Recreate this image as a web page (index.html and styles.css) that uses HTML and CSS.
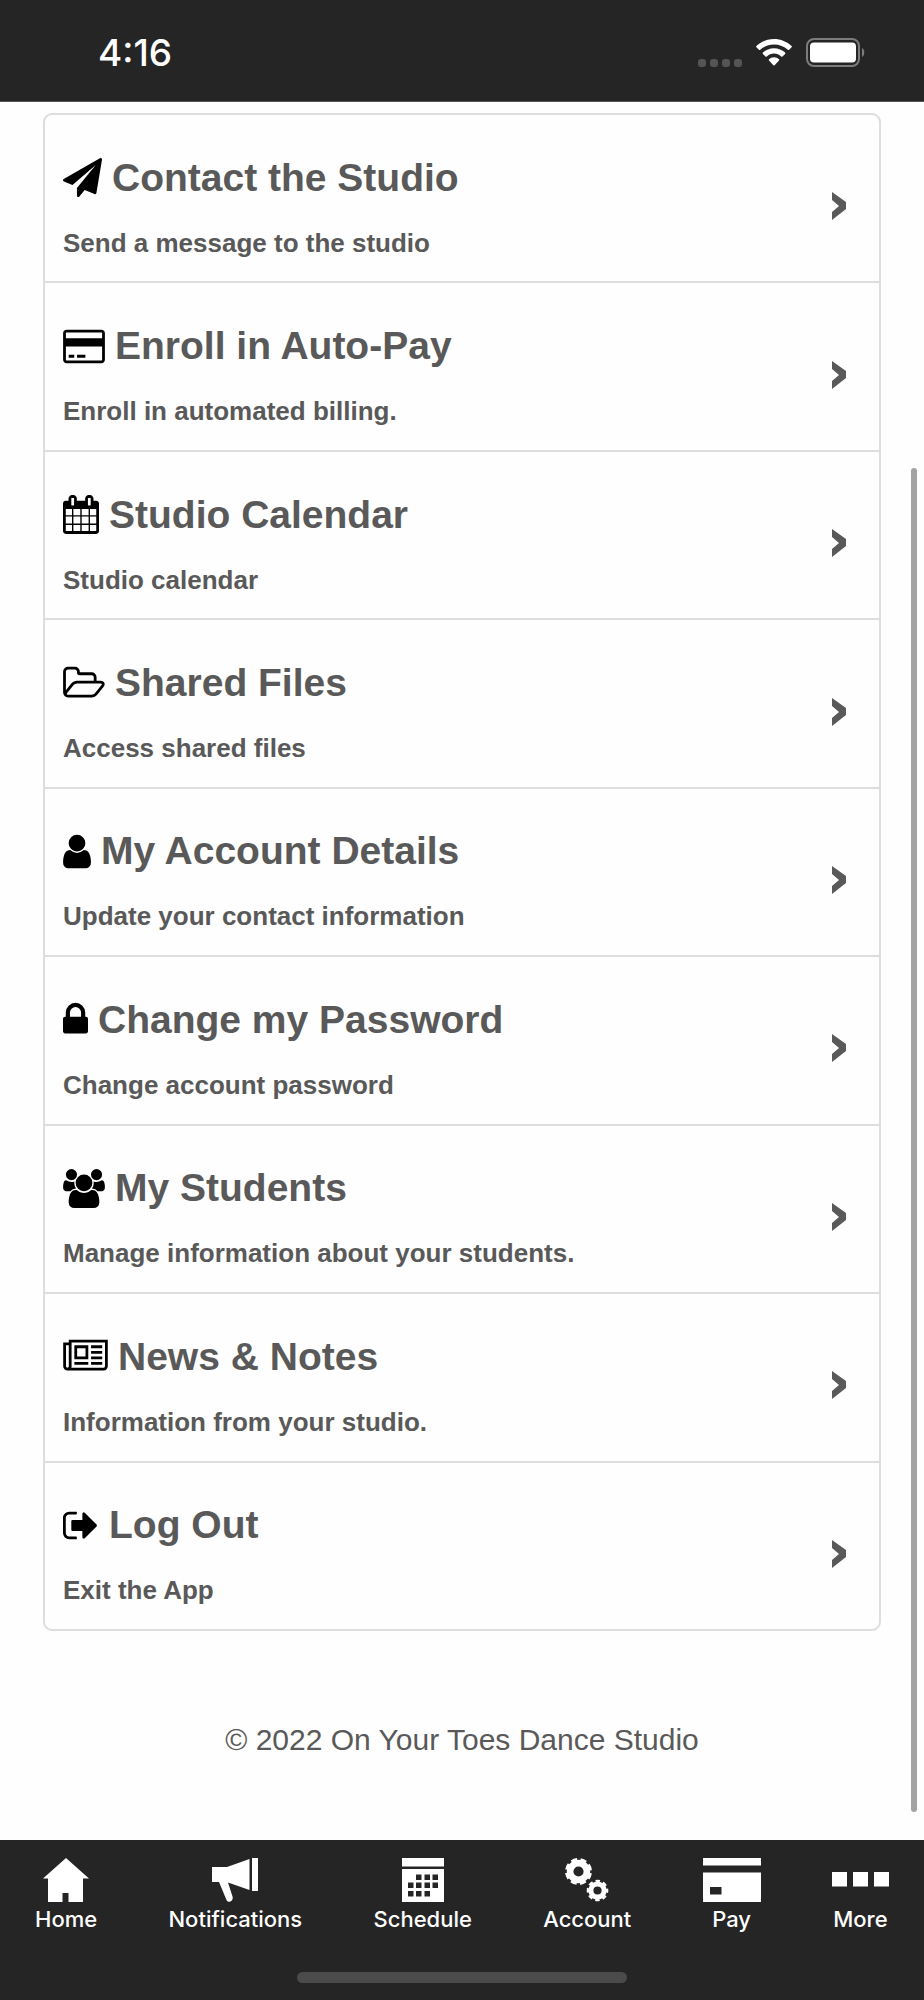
FILE: index.html
```
<!DOCTYPE html>
<html lang="en">
<head>
  <meta charset="UTF-8" />
  <meta name="viewport" content="width=device-width, initial-scale=1.0"/>
  <title>On Your Toes Dance Studio</title>
  <link rel="stylesheet" href="styles.css">
</head>
<body>
  <header class="status-bar">
    <span class="time">4:16</span>
    <div class="status-icons">
      <span class="signal"><i></i><i></i><i></i><i></i></span>
      <svg class="wifi" viewBox="0 0 36 27" width="36" height="27" aria-hidden="true">
        <path fill="#fff" d="M18 0c6.800 0 13 2.700 17.600 7 .4.400.4.900 0 1.300l-2.500 2.500c-.4.400-.9.400-1.300 0C28.200 7.400 23.300 5.400 18 5.400S7.800 7.400 4.200 10.800c-.4.400-.9.400-1.300 0L.4 8.300C0 7.900 0 7.400.4 7 5 2.700 11.200 0 18 0z"/>
        <path fill="#fff" d="M18 9.200c4.300 0 8.200 1.700 11.100 4.400.4.400.4.900 0 1.300l-2.600 2.600c-.4.400-.9.400-1.300 0-1.900-1.800-4.400-2.900-7.200-2.900s-5.300 1.100-7.200 2.900c-.4.400-.9.400-1.300 0l-2.600-2.600c-.4-.4-.4-.9 0-1.300C9.800 10.900 13.700 9.200 18 9.200z"/>
        <path fill="#fff" d="M18 18.200c2 0 3.700.8 5 2 .4.400.4.800 0 1.200l-4.400 4.900c-.4.400-.8.400-1.200 0L13 21.400c-.4-.4-.4-.8 0-1.200 1.300-1.200 3-2 5-2z"/>
      </svg>
      <svg class="battery" viewBox="0 0 59 29" width="59" height="29" aria-hidden="true">
        <rect x="1" y="1" width="52" height="27" rx="7" fill="none" stroke="#7c7c7c" stroke-width="2"/>
        <rect x="4" y="4.500" width="46" height="20" rx="4" fill="#fff"/>
        <path d="M56 10c3 1 3 8 0 9z" fill="#7c7c7c"/>
      </svg>
    </div>
  </header>

  <main class="content">
    <ul class="menu">
      <li>
        <a href="#">
          <div class="item">
            <h2><svg width="39" height="39" viewBox="0 0 1792 1792"><path d="M1764 11q33 24 27 64l-256 1536q-5 29-32 45-14 8-31 8-11 0-24-5l-453-185-242 295q-18 23-49 23-13 0-22-4-19-7-30.500-23.500t-11.500-36.500v-349l864-1059-1069 925-395-162q-37-14-40-55-2-40 32-59l1664-960q15-9 32-9 20 0 36 11z"/></svg>Contact the Studio</h2>
            <p>Send a message to the studio</p>
          </div>
          <svg class="chevron" viewBox="0 0 14 28" width="14" height="28"><path d="M0 0l14 10v7L0 28v-8l7-6-7-6z"/></svg>
        </a>
      </li>
      <li>
        <a href="#">
          <div class="item">
            <h2><svg width="42" height="39" viewBox="0 0 1920 1792"><path d="M1760 128q66 0 113 47t47 113v1216q0 66-47 113t-113 47h-1600q-66 0-113-47t-47-113v-1216q0-66 47-113t113-47h1600zm-1600 128q-13 0-22.500 9.500t-9.500 22.500v224h1664v-224q0-13-9.500-22.500t-22.500-9.500h-1600zm1600 1280q13 0 22.500-9.500t9.500-22.500v-608h-1664v608q0 13 9.500 22.500t22.500 9.500h1600zm-1504-128v-128h256v128h-256zm384 0v-128h384v128h-384z"/></svg>Enroll in Auto-Pay</h2>
            <p>Enroll in automated billing.</p>
          </div>
          <svg class="chevron" viewBox="0 0 14 28" width="14" height="28"><path d="M0 0l14 10v7L0 28v-8l7-6-7-6z"/></svg>
        </a>
      </li>
      <li>
        <a href="#">
          <div class="item">
            <h2><svg width="36" height="39" viewBox="0 0 1664 1792"><path d="M128 1664h288v-288h-288v288zm352 0h320v-288h-320v288zm-352-352h288v-320h-288v320zm352 0h320v-320h-320v320zm-352-384h288v-288h-288v288zm736 736h320v-288h-320v288zm-384-736h320v-288h-320v288zm768 736h288v-288h-288v288zm-384-352h320v-320h-320v320zm-352-864v-288q0-13-9.500-22.500t-22.500-9.500h-64q-13 0-22.500 9.500t-9.500 22.500v288q0 13 9.500 22.500t22.500 9.500h64q13 0 22.500-9.500t9.500-22.500zm736 864h288v-320h-288v320zm-384-384h320v-288h-320v288zm384 0h288v-288h-288v288zm32-480v-288q0-13-9.500-22.500t-22.500-9.500h-64q-13 0-22.500 9.500t-9.500 22.500v288q0 13 9.500 22.500t22.500 9.500h64q13 0 22.500-9.500t9.500-22.500zm384-64v1280q0 52-38 90t-90 38h-1408q-52 0-90-38t-38-90v-1280q0-52 38-90t90-38h128v-96q0-66 47-113t113-47h64q66 0 113 47t47 113v96h384v-96q0-66 47-113t113-47h64q66 0 113 47t47 113v96h128q52 0 90 38t38 90z"/></svg>Studio Calendar</h2>
            <p>Studio calendar</p>
          </div>
          <svg class="chevron" viewBox="0 0 14 28" width="14" height="28"><path d="M0 0l14 10v7L0 28v-8l7-6-7-6z"/></svg>
        </a>
      </li>
      <li>
        <a href="#">
          <div class="item">
            <h2><svg width="42" height="39" viewBox="0 -128 1920 1792"><path d="M1781 803q0-35-53-35h-1088q-40 0-85.500 21.500t-71.500 52.500l-294 363q-18 24-18 40 0 35 53 35h1088q40 0 86-22t71-53l294-363q18-22 18-39zm-1141-163h768v-160q0-40-28-68t-68-28h-576q-40 0-68-28t-28-68v-64q0-40-28-68t-68-28h-320q-40 0-68 28t-28 68v853l256-315q44-53 116-87.500t140-34.500zm1269 163q0 62-46 120l-295 363q-43 53-116 87.500t-140 34.500h-1088q-92 0-158-66t-66-158v-960q0-92 66-158t158-66h320q92 0 158 66t66 158v32h544q92 0 158 66t66 158v160h192q54 0 99 24.500t67 70.500q15 32 15 68z"/></svg>Shared Files</h2>
            <p>Access shared files</p>
          </div>
          <svg class="chevron" viewBox="0 0 14 28" width="14" height="28"><path d="M0 0l14 10v7L0 28v-8l7-6-7-6z"/></svg>
        </a>
      </li>
      <li>
        <a href="#">
          <div class="item">
            <h2><svg width="28" height="39" viewBox="0 0 1280 1792"><path d="M1280 1399q0 109-62.500 187t-150.500 78h-854q-88 0-150.500-78t-62.500-187q0-85 8.500-160.500t31.500-152 58.500-131 94-89 134.500-34.500q131 128 313 128t313-128q76 0 134.500 34.500t94 89 58.500 131 31.500 152 8.500 160.500zm-256-887q0 159-112.500 271.500t-271.500 112.500-271.500-112.500-112.500-271.500 112.500-271.500 271.500-112.500 271.500 112.500 112.500 271.500z"/></svg>My Account Details</h2>
            <p>Update your contact information</p>
          </div>
          <svg class="chevron" viewBox="0 0 14 28" width="14" height="28"><path d="M0 0l14 10v7L0 28v-8l7-6-7-6z"/></svg>
        </a>
      </li>
      <li>
        <a href="#">
          <div class="item">
            <h2><svg width="25" height="39" viewBox="0 0 1152 1792"><path d="M320 768h512v-192q0-106-75-181t-181-75-181 75-75 181v192zm832 96v576q0 40-28 68t-68 28h-960q-40 0-68-28t-28-68v-576q0-40 28-68t68-28h32v-192q0-184 132-316t316-132 316 132 132 316v192h32q40 0 68 28t28 68z"/></svg>Change my Password</h2>
            <p>Change account password</p>
          </div>
          <svg class="chevron" viewBox="0 0 14 28" width="14" height="28"><path d="M0 0l14 10v7L0 28v-8l7-6-7-6z"/></svg>
        </a>
      </li>
      <li>
        <a href="#">
          <div class="item">
            <h2><svg width="42" height="39" viewBox="0 0 1920 1792"><path d="M593 896q-162 5-265 128h-134q-82 0-138-40.500t-56-118.500q0-353 124-353 6 0 43.500 21t97.500 42.500 119 21.500q67 0 133-23-5 37-5 66 0 139 81 256zm1071 637q0 120-73 189.500t-194 69.500h-874q-121 0-194-69.500t-73-189.500q0-53 3.500-103.500t14-109 26.500-108.500 43-97.500 62-81 85.500-53.500 111.500-20q10 0 43 21.500t73 48 107 48 135 21.500 135-21.500 107-48 73-48 43-21.500q61 0 111.500 20t85.500 53.500 62 81 43 97.500 26.500 108.500 14 109 3.500 103.500zm-1024-1277q0 106-75 181t-181 75-181-75-75-181 75-181 181-75 181 75 75 181zm704 384q0 159-112.500 271.500t-271.500 112.500-271.500-112.500-112.500-271.500 112.500-271.500 271.500-112.500 271.500 112.500 112.500 271.500zm576 225q0 78-56 118.500t-138 40.500h-134q-103-123-265-128 81-117 81-256 0-29-5-66 66 23 133 23 59 0 119-21.500t97.500-42.500 43.500-21q124 0 124 353zm-128-609q0 106-75 181t-181 75-181-75-75-181 75-181 181-75 181 75 75 181z"/></svg>My Students</h2>
            <p>Manage information about your students.</p>
          </div>
          <svg class="chevron" viewBox="0 0 14 28" width="14" height="28"><path d="M0 0l14 10v7L0 28v-8l7-6-7-6z"/></svg>
        </a>
      </li>
      <li>
        <a href="#">
          <div class="item">
            <h2><svg width="45" height="39" viewBox="0 0 2048 1792"><path d="M1024 512h-384v384h384v-384zm128 640v128h-640v-128h640zm0-768v640h-640v-640h640zm640 768v128h-512v-128h512zm0-256v128h-512v-128h512zm0-256v128h-512v-128h512zm0-256v128h-512v-128h512zm-1536 960v-960h-128v960q0 26 19 45t45 19 45-19 19-45zm1664 0v-1088h-1536v1088q0 33-11 64h1483q26 0 45-19t19-45zm128-1216v1216q0 80-56 136t-136 56h-1664q-80 0-136-56t-56-136v-1088h256v-128h1792z"/></svg>News &amp; Notes</h2>
            <p>Information from your studio.</p>
          </div>
          <svg class="chevron" viewBox="0 0 14 28" width="14" height="28"><path d="M0 0l14 10v7L0 28v-8l7-6-7-6z"/></svg>
        </a>
      </li>
      <li>
        <a href="#">
          <div class="item">
            <h2><svg width="36" height="39" viewBox="0 0 1664 1792"><path d="M640 1440q0 4 1 20t.500 26.500-3 23.500-10 19.500-20.500 6.500h-320q-119 0-203.500-84.500t-84.500-203.500v-704q0-119 84.500-203.500t203.500-84.500h320q13 0 22.500 9.500t9.500 22.500q0 4 1 20t.500 26.500-3 23.500-10 19.500-20.500 6.500h-320q-66 0-113 47t-47 113v704q0 66 47 113t113 47h312l11.500 1 11.500 3 8 5.500 7 9 2 13.500zm928-544q0 26-19 45l-544 544q-19 19-45 19t-45-19-19-45v-288h-448q-26 0-45-19t-19-45v-384q0-26 19-45t45-19h448v-288q0-26 19-45t45-19 45 19l544 544q19 19 19 45z"/></svg>Log Out</h2>
            <p>Exit the App</p>
          </div>
          <svg class="chevron" viewBox="0 0 14 28" width="14" height="28"><path d="M0 0l14 10v7L0 28v-8l7-6-7-6z"/></svg>
        </a>
      </li>
    </ul>
    <footer class="copyright">© 2022 On Your Toes Dance Studio</footer>
    <div class="scrollbar"></div>
  </main>

  <nav class="tab-bar">
    <div class="tabs">
      <a href="#">
        <svg width="46" height="44" viewBox="0 0 46 44"><path d="M23 0l23 20.500h-6V44H25.500v-9h-6v9H5V20.500H0z"/></svg>
        Home
      </a>
      <a href="#">
        <svg width="46" height="44" viewBox="0 0 46 44"><path d="M0 9h15L37.500 1v31L16 24.500l4.500 14c1.500 5-4.500 7-6 3.500L7 24H0zM40 0h6v33h-6z"/></svg>
        Notifications
      </a>
      <a href="#">
        <svg width="42" height="44" viewBox="0 0 42 44"><path fill-rule="evenodd" d="M0 0h42v8.500H0zM0 11h42v33H0zM14 16.500v5.500h5.500v-5.500zM22.500 16.500v5.500H28v-5.500zM30.500 16.500v5.500H36v-5.500zM6 24.500V30h5.500v-5.500zM14 24.500V30h5.500v-5.500zM22.500 24.500V30H28v-5.500zM30.500 24.500V30H36v-5.500zM6 33v5.500h5.500V33zM14 33v5.500h5.500V33zM22.500 33v5.500H28V33z"/></svg>
        Schedule
      </a>
      <a href="#">
        <svg width="44" height="44" viewBox="0 0 44 44">
          <g fill="none" stroke="#fff">
            <circle cx="13.500" cy="13.500" r="8.400" stroke-width="6.600"/>
            <circle cx="13.500" cy="13.500" r="12" stroke-width="3" stroke-dasharray="6 3.420" stroke-dashoffset="-1.710"/>
            <circle cx="32.500" cy="32.500" r="6.600" stroke-width="5"/>
            <circle cx="32.500" cy="32.500" r="9.500" stroke-width="2.600" stroke-dasharray="4.400 3.060" stroke-dashoffset="2.200"/>
          </g>
        </svg>
        Account
      </a>
      <a href="#">
        <svg width="58" height="44" viewBox="0 0 58 44"><path fill-rule="evenodd" d="M0 0h58v7.500H0zM0 14.500h58V44H0zM7 29v7.500h11.500V29z"/></svg>
        Pay
      </a>
      <a href="#">
        <svg width="57" height="44" viewBox="0 0 57 44"><path d="M0 14h15v14.500H0zM21 14h15v14.500H21zM42 14h15v14.500H42z"/></svg>
        More
      </a>
    </div>
    <div class="home-indicator"></div>
  </nav>
</body>
</html>
```

FILE: styles.css
```
* {
  box-sizing: border-box;
}

body {
  font-family: "Liberation Sans", Arial, sans-serif;
  background-color: #fefefe;
  color: #595959;
  margin: 0;
  min-height: 100vh;
  display: flex;
  flex-direction: column;
}

a {
  color: inherit;
  text-decoration: none;
}

.status-bar {
  background-color: #252525;
  height: 102px;
  padding: 4px 59px 0 98px;
  border-bottom: 1px solid #555;
  display: flex;
  justify-content: space-between;
  align-items: center;
}

.time {
  font-family: Inter, sans-serif;
  font-size: 37px;
  font-weight: 500;
  color: #fff;
}

.status-icons {
  display: flex;
  align-items: center;
  gap: 14px;
}

.signal {
  display: flex;
  align-self: flex-end;
  gap: 4px;
}

.signal i {
  width: 8px;
  height: 8px;
  border-radius: 3px;
  background-color: #555;
}

.content {
  position: relative;
  flex: 1;
  display: flex;
  flex-direction: column;
  padding: 11px 43px 0;
}

.menu {
  flex: 1;
  list-style: none;
  margin: 0;
  padding: 0;
  border: 2px solid #ddd;
  border-radius: 9px;
  display: flex;
  flex-direction: column;
}

.menu li {
  flex: 1;
  display: flex;
  border-top: 2px solid #ddd;
}

.menu li:first-child {
  border-top: none;
}

.menu a {
  flex: 1;
  padding: 0 33px 0 18px;
  display: flex;
  justify-content: space-between;
  align-items: center;
}

.item h2 {
  margin: 16px 0 25px;
  font-size: 39px;
  line-height: 48px;
  display: flex;
  align-items: center;
  gap: 10px;
}

.item h2 svg {
  fill: #000;
}

.item p {
  margin: 0;
  font-size: 26px;
  font-weight: bold;
  line-height: 32px;
}

.chevron {
  margin-top: 16px;
  fill: #595959;
}

.copyright {
  padding: 89px 0 80px;
  font-size: 30px;
  line-height: 40px;
  text-align: center;
}

.scrollbar {
  position: absolute;
  right: 7px;
  top: 366px;
  bottom: 28px;
  width: 6px;
  border-radius: 3px;
  background-color: #a3a3a3;
}

.tab-bar {
  background-color: #252525;
  height: 160px;
  padding: 18px 35px 17px;
  display: flex;
  flex-direction: column;
  justify-content: space-between;
  align-items: center;
}

.tabs {
  width: 100%;
  display: flex;
  justify-content: space-between;
}

.tabs a {
  display: flex;
  flex-direction: column;
  align-items: center;
  gap: 4px;
  font-family: Inter, sans-serif;
  font-size: 22px;
  font-weight: 500;
  line-height: 26px;
  color: #fff;
}

.tabs svg {
  fill: #fff;
}

.home-indicator {
  width: 330px;
  height: 11px;
  border-radius: 6px;
  background-color: #4b4b4b;
}
```
